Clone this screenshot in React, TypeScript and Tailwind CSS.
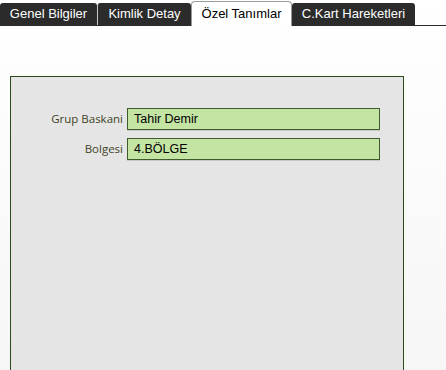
const tabs = [
  { label: 'Genel Bilgiler', width: 'w-[97px]', active: false },
  { label: 'Kimlik Detay', width: 'w-[94px]', active: false },
  { label: 'Özel Tanımlar', width: 'w-[101px]', active: true },
  { label: 'C.Kart Hareketleri', width: 'w-[123px]', active: false },
];

const fields = [
  { label: 'Grup Baskani', value: 'Tahir Demir' },
  { label: 'Bolgesi', value: '4.BÖLGE' },
];

export default function App() {
  return (
    <div className="w-[446px] h-[370px] flex flex-col overflow-hidden bg-gradient-to-b from-white to-[#f6f6f6]">
      <div className="flex items-end h-[26px] border-b border-[#2a2a2a] font-['Liberation_Sans',Arial,sans-serif] text-[13px]">
        {tabs.map((tab, i) =>
          tab.active ? (
            <div
              key={i}
              className={`${tab.width} h-[25px] -mb-px flex items-center justify-center bg-white text-black border border-b-0 border-[#9a9a9a] rounded-t-[4px]`}
            >
              {tab.label}
            </div>
          ) : (
            <div
              key={i}
              className={`${tab.width} h-[22px] flex items-center justify-center bg-[#2b2b2b] text-white rounded-t-[3px] ${i === 1 ? 'border-l border-[#c8c8c8]' : ''}`}
            >
              {tab.label}
            </div>
          )
        )}
      </div>

      <div className="mt-[50px] ml-[10px] w-[394px] flex-1 bg-[#e5e5e5] border border-b-0 border-[#2d4a1c] pt-[31px]">
        <div className="flex flex-col gap-2">
          {fields.map((f) => (
            <div key={f.label} className="flex items-center">
              <div className="w-[116px] pr-[4px] text-right text-[11.5px] text-[#3f4426] font-['Open_Sans',sans-serif]">
                {f.label}
              </div>
              <div className="w-[253px] h-[22px] flex items-center px-[6px] bg-[#c4e4a4] border border-[#3f5a2c] shadow-[0_1px_0_rgba(0,0,0,0.12)] text-[12.5px] text-black font-['Liberation_Sans',Arial,sans-serif]">
                {f.value}
              </div>
            </div>
          ))}
        </div>
      </div>
    </div>
  );
}
